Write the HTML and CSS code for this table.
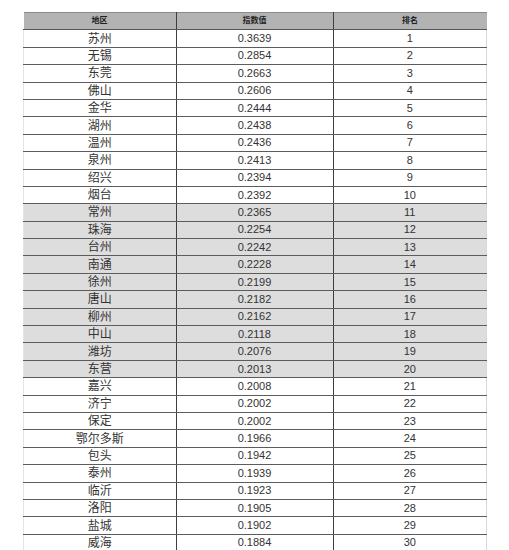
FILE: index.html
```html
<!DOCTYPE html>
<html lang="zh">
<head>
<meta charset="utf-8">
<title>指数排名</title>
<link rel="stylesheet" href="styles.css">
</head>
<body>
<table class="rank">
<thead>
<tr><th>地区</th><th>指数值</th><th>排名</th></tr>
</thead>
<tbody>
<tr><td>苏州</td><td>0.3639</td><td>1</td></tr>
<tr><td>无锡</td><td>0.2854</td><td>2</td></tr>
<tr><td>东莞</td><td>0.2663</td><td>3</td></tr>
<tr><td>佛山</td><td>0.2606</td><td>4</td></tr>
<tr><td>金华</td><td>0.2444</td><td>5</td></tr>
<tr><td>湖州</td><td>0.2438</td><td>6</td></tr>
<tr><td>温州</td><td>0.2436</td><td>7</td></tr>
<tr><td>泉州</td><td>0.2413</td><td>8</td></tr>
<tr><td>绍兴</td><td>0.2394</td><td>9</td></tr>
<tr><td>烟台</td><td>0.2392</td><td>10</td></tr>
<tr class="shade"><td>常州</td><td>0.2365</td><td>11</td></tr>
<tr class="shade"><td>珠海</td><td>0.2254</td><td>12</td></tr>
<tr class="shade"><td>台州</td><td>0.2242</td><td>13</td></tr>
<tr class="shade"><td>南通</td><td>0.2228</td><td>14</td></tr>
<tr class="shade"><td>徐州</td><td>0.2199</td><td>15</td></tr>
<tr class="shade"><td>唐山</td><td>0.2182</td><td>16</td></tr>
<tr class="shade"><td>柳州</td><td>0.2162</td><td>17</td></tr>
<tr class="shade"><td>中山</td><td>0.2118</td><td>18</td></tr>
<tr class="shade"><td>潍坊</td><td>0.2076</td><td>19</td></tr>
<tr class="shade"><td>东营</td><td>0.2013</td><td>20</td></tr>
<tr><td>嘉兴</td><td>0.2008</td><td>21</td></tr>
<tr><td>济宁</td><td>0.2002</td><td>22</td></tr>
<tr><td>保定</td><td>0.2002</td><td>23</td></tr>
<tr><td>鄂尔多斯</td><td>0.1966</td><td>24</td></tr>
<tr><td>包头</td><td>0.1942</td><td>25</td></tr>
<tr><td>泰州</td><td>0.1939</td><td>26</td></tr>
<tr><td>临沂</td><td>0.1923</td><td>27</td></tr>
<tr><td>洛阳</td><td>0.1905</td><td>28</td></tr>
<tr><td>盐城</td><td>0.1902</td><td>29</td></tr>
<tr><td>威海</td><td>0.1884</td><td>30</td></tr>
</tbody>
</table>
</body>
</html>
```

FILE: styles.css
```css
html, body {
  margin: 0;
  padding: 0;
  background: #ffffff;
}

body {
  padding: 12px 0 0 23px;
  font-family: "Liberation Sans", "Noto Sans CJK SC", sans-serif;
  color: #333333;
}

.rank {
  border-collapse: collapse;
  table-layout: fixed;
  width: 461px;
}

.rank th,
.rank td {
  padding: 0;
  text-align: center;
  vertical-align: middle;
  line-height: 1;
  overflow: hidden;
  white-space: nowrap;
}

.rank th:nth-child(1),
.rank td:nth-child(1) { width: 152px; }
.rank th:nth-child(2),
.rank td:nth-child(2) { width: 156px; }
.rank th:nth-child(3),
.rank td:nth-child(3) { width: 153px; }

.rank tr {
  height: 17.4px;
}

.rank thead th {
  background: #b3b3b3;
  border-top: 1px solid #8a8a8a;
  border-bottom: 1px solid #555555;
  font-size: 8px;
  font-weight: bold;
  color: #222222;
}

.rank td {
  border-bottom: 1px solid #5c5c5c;
  font-size: 11px;
}

.rank td:nth-child(1) {
  font-size: 12px;
  border-left: 1px solid #e4e4e4;
}

.rank th:nth-child(1),
.rank th:nth-child(2),
.rank td:nth-child(1),
.rank td:nth-child(2) {
  border-right: 1px solid #3e3e3e;
}

.rank td:nth-child(3) {
  border-right: 1px solid #d8d8d8;
}

.rank tr.shade td {
  background: #dddddd;
}
```
